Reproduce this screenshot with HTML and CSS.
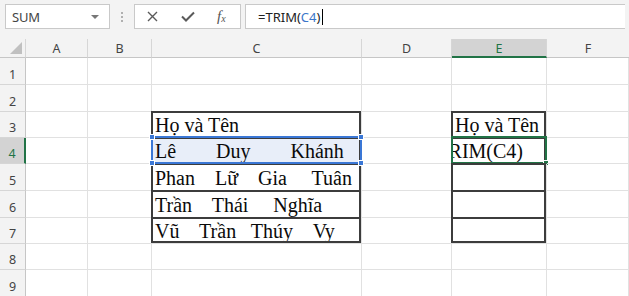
FILE: index.html
```html
<!DOCTYPE html>
<html>
<head>
<meta charset="utf-8">
<link rel="stylesheet" href="styles.css">
</head>
<body>
<div class="app">
  <div class="toolbar">
    <div class="namebox">
      <span class="nb-text">SUM</span>
      <span class="nb-arrow"></span>
    </div>
    <div class="dots"><i></i><i></i><i></i></div>
    <div class="fxbox">
      <svg class="ic-x" width="11" height="11" viewBox="0 0 11 11"><path d="M1 1L10 10M10 1L1 10" stroke="#5a5a5a" stroke-width="1.4" fill="none"/></svg>
      <svg class="ic-ok" width="14" height="11" viewBox="0 0 14 11"><path d="M1 5.5L5 9.5L13 1.5" stroke="#5a5a5a" stroke-width="2" fill="none"/></svg>
      <span class="ic-fx">f<sub>x</sub></span>
    </div>
    <div class="formula"><span>=TRIM(</span><span class="ref">C4</span><span>)</span><span class="caret"></span></div>
  </div>

  <div class="sheet">
    <div class="hd corner"><span class="tri"></span></div>
    <div class="hd">A</div>
    <div class="hd">B</div>
    <div class="hd">C</div>
    <div class="hd">D</div>
    <div class="hd sel-col">E</div>
    <div class="hd last">F</div>

    <div class="rh">1</div><div class="c"></div><div class="c"></div><div class="c"></div><div class="c"></div><div class="c"></div><div class="c"></div>
    <div class="rh">2</div><div class="c"></div><div class="c"></div><div class="c"></div><div class="c"></div><div class="c"></div><div class="c"></div>

    <div class="rh">3</div><div class="c"></div><div class="c"></div>
    <div class="c tb">Họ và Tên</div>
    <div class="c"></div>
    <div class="c tb">Họ và Tên</div>
    <div class="c"></div>

    <div class="rh sel-row">4</div><div class="c"></div><div class="c"></div>
    <div class="c tb refcell">Lê        Duy        Khánh<span class="refbox"><i class="h tl"></i><i class="h tr"></i><i class="h bl"></i><i class="h br"></i></span></div>
    <div class="c"></div>
    <div class="c tb active"><span class="edit">=TRIM(C4)</span><span class="actbox"><i class="fill"></i></span></div>
    <div class="c"></div>

    <div class="rh">5</div><div class="c"></div><div class="c"></div>
    <div class="c tb">Phan    Lữ    Gia     Tuân</div>
    <div class="c"></div>
    <div class="c tb"></div>
    <div class="c"></div>

    <div class="rh">6</div><div class="c"></div><div class="c"></div>
    <div class="c tb">Trần    Thái     Nghĩa</div>
    <div class="c"></div>
    <div class="c tb"></div>
    <div class="c"></div>

    <div class="rh">7</div><div class="c"></div><div class="c"></div>
    <div class="c tb tb-last">Vũ    Trần   Thúy    Vy</div>
    <div class="c"></div>
    <div class="c tb tb-last"></div>
    <div class="c"></div>

    <div class="rh">8</div><div class="c"></div><div class="c"></div><div class="c"></div><div class="c"></div><div class="c"></div><div class="c"></div>
    <div class="rh">9</div><div class="c"></div><div class="c"></div><div class="c"></div><div class="c"></div><div class="c"></div><div class="c"></div>
  </div>
</div>
</body>
</html>
```

FILE: styles.css
```css
* { box-sizing: border-box; }
html, body { margin: 0; padding: 0; }
body { width: 629px; height: 296px; overflow: hidden; background: #fff; font-family: "Noto Sans", "Open Sans", sans-serif; }

.app { display: flex; flex-direction: column; width: 629px; }

.toolbar {
  height: 39px;
  background: #f3f3f3;
  display: flex;
  align-items: flex-start;
  padding: 4px 4px 0 5px;
}
.namebox {
  width: 105px; height: 25px;
  background: #fff;
  border: 1px solid #c9c9c9;
  display: flex; align-items: center; justify-content: space-between;
  padding: 0 10px 0 6px;
}
.nb-text { font-size: 13px; color: #444; letter-spacing: -0.2px; }
.nb-arrow { width: 0; height: 0; border-left: 4px solid transparent; border-right: 4px solid transparent; border-top: 4px solid #777; }

.dots { width: 24px; height: 25px; display: flex; flex-direction: column; align-items: center; justify-content: center; gap: 2px; }
.dots i { display: block; width: 2px; height: 2px; background: #b0b0b0; }

.fxbox {
  width: 107px; height: 25px;
  background: #fff;
  border: 1px solid #c9c9c9;
  display: flex; align-items: center;
  padding-left: 12px;
}
.ic-x { margin-right: 23px; }
.ic-ok { margin-right: 22px; }
.ic-fx { font-family: "Liberation Serif", serif; font-style: italic; font-size: 15px; color: #555; line-height: 1; }
.ic-fx sub { font-size: 10px; vertical-align: -1px; margin-left: 0px; }

.formula {
  margin-left: 4px;
  flex: 1; height: 25px;
  background: #fff;
  border: 1px solid #c9c9c9;
  border-right: none;
  display: flex; align-items: center;
  padding-left: 12px;
  font-size: 13px; color: #222;
}
.formula .ref { color: #3b76c9; }
.caret { display: block; width: 1px; height: 16px; background: #000; margin-left: 2px; }

.sheet {
  display: grid;
  grid-template-columns: 26px 62px 64px 210px 90px 95px 1fr;
  grid-template-rows: 19px 27px 27px 26px 26px 27px 27px 26px 26px 27px;
}
.hd {
  background: #f3f3f3;
  border-right: 1px solid #d6d6d6;
  border-bottom: 1px solid #c6c6c6;
  font-size: 12.5px; color: #444;
  display: flex; align-items: center; justify-content: center;
  padding-top: 1px;
}
.hd.last { border-right: none; }
.corner { position: relative; }
.tri { position: absolute; right: 3px; bottom: 3px; width: 0; height: 0; border-left: 12px solid transparent; border-bottom: 12px solid #c0c0c0; }
.sel-col { background: #d3d3d3; color: #217346; border-bottom: 2px solid #217346; }

.rh {
  background: #f3f3f3;
  border-right: 1px solid #c6c6c6;
  border-bottom: 1px solid #d6d6d6;
  font-size: 12.5px; color: #444;
  display: flex; align-items: center; justify-content: center;
  padding-top: 6px;
}
.sel-row { background: #d3d3d3; color: #217346; border-right: 2px solid #217346; }

.c {
  border-right: 1px solid #e1e1e1;
  border-bottom: 1px solid #e1e1e1;
  position: relative;
  font-family: "Liberation Serif", "Times New Roman", serif;
  font-size: 20px; color: #0a0a0a;
  white-space: pre;
  display: flex; align-items: flex-end;
  padding: 0 0 1px 3px;
  line-height: 22px;
}
.tb::after {
  content: "";
  position: absolute;
  top: -1px; left: -1px; right: 0; bottom: 0;
  border: 2px solid #3c3c3c;
  border-bottom: none;
  pointer-events: none;
}
.tb-last::after { border-bottom: 2px solid #3c3c3c; }

.refcell { background: #e8eef9; }
.refbox {
  position: absolute;
  top: -2px; left: -1px; right: -1px; bottom: -1px;
  border: 2px solid #3a77d6;
  z-index: 2;
}
.h { position: absolute; width: 6px; height: 6px; background: #3a77d6; border: 1px solid #fff; }
.h.tl { top: -4px; left: -4px; }
.h.tr { top: -4px; right: -4px; }
.h.bl { bottom: -4px; left: -4px; }
.h.br { bottom: -4px; right: -4px; }

.active { justify-content: flex-end; padding-right: 23px; clip-path: inset(-4px -4px -4px -1px); }
.edit { display: block; }
.actbox {
  position: absolute;
  top: -2px; left: -1px; right: -1px; bottom: -1px;
  border: 2px solid #217346;
  z-index: 2;
}
.fill { position: absolute; right: -4px; bottom: -4px; width: 6px; height: 6px; background: #217346; border: 1px solid #fff; }
```
